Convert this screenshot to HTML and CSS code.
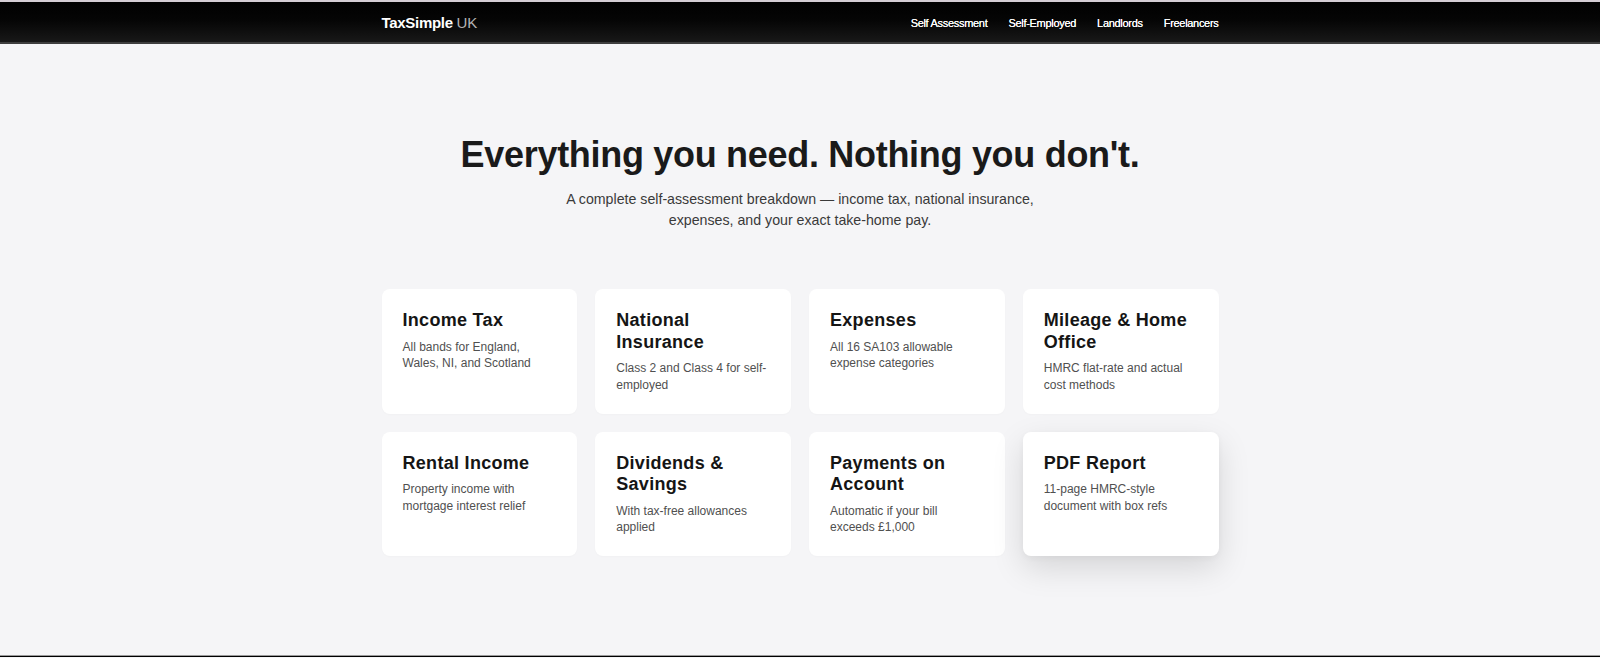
FILE: index.html
```html
<!DOCTYPE html>
<html lang="en">
<head>
<meta charset="utf-8">
<title>TaxSimple UK — Features</title>
<link rel="stylesheet" href="styles.css">
</head>
<body>
<header class="nav">
  <div class="nav-inner">
    <a class="logo" href="#"><span class="logo-main">TaxSimple</span> <span class="logo-sub">UK</span></a>
    <nav class="links">
      <a href="#">Self Assessment</a>
      <a href="#">Self-Employed</a>
      <a href="#">Landlords</a>
      <a href="#">Freelancers</a>
    </nav>
  </div>
</header>
<main class="features">
  <h1 class="title">Everything you need. Nothing you don't.</h1>
  <p class="lead">A complete self-assessment breakdown — income tax, national insurance, expenses, and your exact take-home pay.</p>
  <div class="grid">
    <div class="card"><h3>Income Tax</h3><p>All bands for England, Wales, NI, and Scotland</p></div>
    <div class="card"><h3>National Insurance</h3><p>Class 2 and Class 4 for self-employed</p></div>
    <div class="card"><h3>Expenses</h3><p>All 16 SA103 allowable expense categories</p></div>
    <div class="card"><h3>Mileage &amp; Home Office</h3><p>HMRC flat-rate and actual cost methods</p></div>
    <div class="card"><h3>Rental Income</h3><p>Property income with mortgage interest relief</p></div>
    <div class="card"><h3>Dividends &amp; Savings</h3><p>With tax-free allowances applied</p></div>
    <div class="card"><h3>Payments on Account</h3><p>Automatic if your bill exceeds £1,000</p></div>
    <div class="card card-hover"><h3>PDF Report</h3><p>11-page HMRC-style document with box refs</p></div>
  </div>
</main>
<footer class="footer"></footer>
</body>
</html>
```

FILE: styles.css
```css
* { box-sizing: border-box; }
html, body { margin: 0; padding: 0; }
body {
  background: #f5f5f7;
  font-family: "Liberation Sans", Arial, Helvetica, sans-serif;
  color: #1a1a1a;
}
.nav {
  height: 44px;
  border-top: 2px solid #d3ccd3;
  border-bottom: 2px solid #3e3e3e;
  background: linear-gradient(#000 0%, #050505 45%, #181818 100%);
}
.nav-inner {
  width: 837px;
  height: 100%;
  margin: 0 auto;
  display: flex;
  align-items: center;
  justify-content: space-between;
}
.logo {
  text-decoration: none;
  font-size: 15px;
  letter-spacing: -0.3px;
  padding-top: 1px;
}
.logo-main { color: #fff; font-weight: 700; }
.logo-sub { color: #b4b4b4; font-weight: 400; }
.links { display: flex; gap: 21px; padding-top: 1px; }
.links a {
  color: #fff;
  text-decoration: none;
  font-size: 11px;
  letter-spacing: -0.3px;
  text-shadow: 0 0 0.4px #fff;
}
.features {
  padding: 89px 0 99px;
  display: flex;
  flex-direction: column;
  align-items: center;
}
.title {
  margin: 0;
  font-size: 36px;
  line-height: 1.2;
  font-weight: 700;
  letter-spacing: -0.3px;
  color: #1a1a1a;
}
.lead {
  margin: 13px 0 0;
  max-width: 490px;
  text-align: center;
  font-size: 14.2px;
  line-height: 21px;
  color: #3a3a3a;
}
.grid {
  margin-top: 58px;
  width: 837px;
  display: grid;
  grid-template-columns: repeat(4, 1fr);
  gap: 18px;
}
.card {
  background: #fff;
  border-radius: 8px;
  padding: 21px;
  box-shadow: 0 1px 2px rgba(0,0,0,0.02);
}
.card h3 {
  margin: 0;
  font-size: 18px;
  line-height: 21.6px;
  font-weight: 700;
  letter-spacing: 0.3px;
  color: #151515;
}
.card p {
  margin: 7px 0 0;
  font-size: 12px;
  line-height: 16.2px;
  color: #505050;
}
.card-hover {
  box-shadow: 0 12px 32px rgba(0,0,0,0.13), 0 2px 6px rgba(0,0,0,0.04);
}
.footer {
  height: 2px;
  background: #000;
  border-top: 1px solid #9a9a9a;
}
```
